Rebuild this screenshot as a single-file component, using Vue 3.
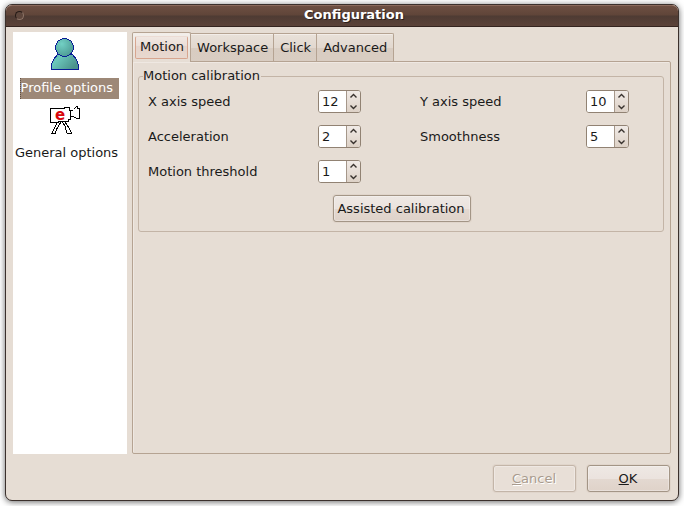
<script setup>
import { ref, reactive } from 'vue'

const section = ref('profile')
const tabs = ['Motion', 'Workspace', 'Click', 'Advanced']
const activeTab = ref('Motion')
const fields = reactive([
  { id: 'x-speed', label: 'X axis speed', value: 12 },
  { id: 'y-speed', label: 'Y axis speed', value: 10 },
  { id: 'acceleration', label: 'Acceleration', value: 2 },
  { id: 'smoothness', label: 'Smoothness', value: 5 },
  { id: 'threshold', label: 'Motion threshold', value: 1 },
])
</script>

<template>
  <div class="desktop">
    <div class="window" role="dialog" aria-labelledby="window-title">
      <header class="titlebar">
        <button class="close" type="button" aria-label="Close"></button>
        <h1 id="window-title">Configuration</h1>
      </header>
      <div class="body">
        <nav class="sections">
          <button type="button" class="section" :class="{ selected: section === 'profile' }" @click="section = 'profile'">
            <svg width="32" height="34" viewBox="0 0 32 34" aria-hidden="true">
              <defs>
                <radialGradient id="skin" cx="0.35" cy="0.3" r="0.8">
                  <stop offset="0" stop-color="#72d0c4" />
                  <stop offset="1" stop-color="#4a9690" />
                </radialGradient>
                <linearGradient id="torso" x1="0" y1="0" x2="1" y2="0.5">
                  <stop offset="0" stop-color="#469a92" />
                  <stop offset="0.3" stop-color="#6cc8bc" />
                  <stop offset="1" stop-color="#4a928c" />
                </linearGradient>
              </defs>
              <g stroke="#0a1c96" shape-rendering="crispEdges">
                <path d="M1.500 32.500V27.500L3.500 22.500L7.500 17.500H22.500L26.500 22.500L28.500 28.500V32.500Z" fill="url(#torso)" />
                <circle cx="14.500" cy="10.500" r="9" fill="url(#skin)" />
              </g>
            </svg>
            <span>Profile options</span>
          </button>
          <button type="button" class="section" :class="{ selected: section === 'general' }" @click="section = 'general'">
            <svg width="34" height="31" viewBox="0 0 34 31" aria-hidden="true">
              <g fill="none" stroke="#000" shape-rendering="crispEdges">
                <path d="M1.500 3.500H15.500V2.500H20.500V5.500H21.500V14.500H19.500V16.500H9.500V17.500H1.500Z" />
                <path d="M21.500 6.500L24.500 4.500L27.500 1.500H28.500V3.500H30.500V13.500H27.500L24.500 11.500H21.500" />
                <path d="M8.500 17.500L6.500 20.500L4.500 25.500L2.500 28.500H6.500L7.500 24.500L10.500 19.500L11.500 17.500" />
                <path d="M13.500 17.500L16.500 21.500L17.500 27.500L18.500 28.500H22.500L20.500 23.500L17.500 19.500L16.500 17.500" />
              </g>
              <text x="6" y="15" class="mark">e</text>
            </svg>
            <span>General options</span>
          </button>
        </nav>
        <main class="notebook">
          <div class="tabs" role="tablist">
            <button
              v-for="tab in tabs"
              :key="tab"
              type="button"
              role="tab"
              class="tab"
              :class="{ active: tab === activeTab }"
              :aria-selected="tab === activeTab"
              @click="activeTab = tab"
            ><span>{{ tab }}</span></button>
          </div>
          <section class="pane" role="tabpanel">
            <fieldset class="group">
              <legend>Motion calibration</legend>
              <div class="fields">
                <template v-for="f in fields" :key="f.id">
                  <label :for="f.id">{{ f.label }}</label>
                  <div class="spin">
                    <input :id="f.id" v-model.number="f.value" type="number" />
                    <div class="arrows">
                      <button type="button" :aria-label="'Increase ' + f.label" @click="f.value++">
                        <svg width="9" height="6" viewBox="0 0 9 6"><path d="M1.500 4.500L4.500 1.500L7.500 4.500" /></svg>
                      </button>
                      <button type="button" :aria-label="'Decrease ' + f.label" @click="f.value--">
                        <svg width="9" height="6" viewBox="0 0 9 6"><path d="M1.500 1.500L4.500 4.500L7.500 1.500" /></svg>
                      </button>
                    </div>
                  </div>
                </template>
              </div>
              <button type="button" class="btn assisted">Assisted calibration</button>
            </fieldset>
          </section>
        </main>
      </div>
      <footer class="actions">
        <button type="button" class="btn" disabled><u>C</u>ancel</button>
        <button type="button" class="btn"><u>O</u>K</button>
      </footer>
    </div>
  </div>
</template>

<style>
body {
  background: #fff;
}
</style>

<style scoped>
* {
  box-sizing: border-box;
}
.desktop {
  display: flex;
  min-height: 100vh;
  padding: 4px 5px 5px;
  overflow: hidden;
  font: 13px/16px "DejaVu Sans", sans-serif;
  color: #1a1a1a;
}
button,
input {
  font: inherit;
  color: inherit;
  margin: 0;
}
.window {
  flex: 1;
  display: flex;
  flex-direction: column;
  min-width: 0;
  border: 1px solid #3b302c;
  border-radius: 7px;
  background: #e6ddd4;
  box-shadow: 0 1px 6px rgba(0, 0, 0, 0.6);
}
.titlebar {
  display: grid;
  grid-template-columns: 24px 1fr;
  align-items: center;
  height: 22px;
  padding: 0 4px 2px;
  border-top: 1px solid #8b6a5c;
  border-bottom: 1px solid #34241f;
  border-radius: 6px 6px 0 0;
  background: linear-gradient(#6d4f42 0, #604539 45%, #4e3b33 50%, #5b4238 100%);
}
.titlebar h1 {
  margin: 0;
  font-size: 13px;
  text-align: center;
  color: #fff;
  text-shadow: 1px 1px 0 #2e201b;
}
.close {
  width: 9px;
  height: 9px;
  margin-left: 5px;
  padding: 0;
  border: 1px solid #251a16;
  border-color: #251a16 #8d7468 #8d7468 #251a16;
  border-radius: 50%;
  background: #5d463c;
}
.body {
  flex: 1;
  display: flex;
  gap: 5px;
  padding: 5px 7px 0;
}
.sections {
  width: 114px;
  padding: 5px 8px 0 0;
  background: #fff;
}
.section {
  display: flex;
  flex-direction: column;
  align-items: center;
  gap: 7px;
  width: 100%;
  padding: 0;
  border: 0;
  background: none;
  white-space: nowrap;
}
.section + .section {
  margin-top: 6px;
}
.section span {
  padding: 2px 0 3px 1px;
}
.section.selected span {
  align-self: flex-end;
  padding: 2px 6px 3px 0;
  background: #9d8877;
  color: #fff;
  border-left: 1px dotted #5f5044;
}
.mark {
  font: bold 15px "DejaVu Sans", sans-serif;
  fill: #d8060c;
}
.notebook {
  flex: 1;
  display: flex;
  flex-direction: column;
  min-width: 0;
}
.tabs {
  display: flex;
  align-items: flex-end;
}
.tab {
  height: 28px;
  padding: 0 5px 0 6px;
  border: 1px solid #b5a392;
  border-left-width: 0;
  border-bottom: 0;
  background: linear-gradient(#e9e1d9 0, #e2d8cf 50%, #d8ccc1 52%, #d9cdc2 100%);
  box-shadow: inset 0 1px #f3ede8;
}
.tab:last-child {
  padding-right: 6px;
  border-top-right-radius: 2px;
}
.tab.active {
  z-index: 1;
  height: 30px;
  margin-bottom: -1px;
  padding: 0 2px;
  border-left-width: 1px;
  border-radius: 2px 2px 0 0;
  background: linear-gradient(#f3efeb, #e6ddd4);
}
.tab.active span {
  display: block;
  padding: 2px 3px 3px 4px;
  border: 1px solid #d7a58f;
  border-top-color: #ecdcd4;
  border-radius: 2px;
  background: linear-gradient(#f0e7e2 0, #ecdfd8 40%, #e6d4cb 45%, #e8d8cf 100%);
}
.pane {
  flex: 1;
  padding: 6px 6px 0 5px;
  border: 1px solid #b5a392;
  border-radius: 0 2px 2px 2px;
  box-shadow: inset 1px 1px #efe8e2;
}
.group {
  margin: 0;
  min-width: 0;
  padding: 6px 8px 9px 9px;
  border: 1px solid #c3b4a6;
  border-radius: 3px;
}
.group legend {
  margin-left: -5px;
  padding: 0 1px 0 0;
}
.fields {
  display: grid;
  grid-template-columns: 170fr 102fr 166fr 69fr;
  row-gap: 12px;
  align-items: center;
}
.spin {
  display: flex;
  width: 43px;
  height: 23px;
  border: 1px solid #918273;
  border-radius: 3px;
  background: #fff;
  overflow: hidden;
}
.spin input {
  width: 27px;
  min-width: 0;
  padding: 0 0 0 3px;
  border: 0;
  outline: 0;
  background: #fff;
  appearance: textfield;
  -moz-appearance: textfield;
}
.spin input::-webkit-inner-spin-button {
  display: none;
}
.arrows {
  display: flex;
  flex-direction: column;
  width: 14px;
  border-left: 1px solid #a5978a;
  background: linear-gradient(#f0eae6, #ddd1c6);
}
.arrows button {
  flex: 1;
  display: flex;
  align-items: center;
  justify-content: center;
  padding: 0;
  border: 0;
  background: none;
}
.arrows path {
  fill: none;
  stroke: #38322e;
  stroke-width: 1.4px;
}
.btn {
  width: 83px;
  height: 27px;
  padding: 0 1px 0 0;
  border: 1px solid #a39586;
  border-radius: 3px;
  background: linear-gradient(#eee8e4 0, #ebe3de 50%, #e3d8d0 54%, #dfd2c9 100%);
  box-shadow: inset 0 0 0 1px rgba(255, 255, 255, 0.3), 0 0 0 1px #e0d5cb;
}
.btn:disabled {
  border-color: #c3b5a8;
  background: #e8dfd7;
  color: #a99b8e;
  text-shadow: 1px 1px 0 #fff;
}
.assisted {
  display: block;
  width: 138px;
  margin: 12px auto 0;
}
.actions {
  display: flex;
  justify-content: flex-end;
  gap: 11px;
  padding: 11px 8px 8px;
}
</style>
